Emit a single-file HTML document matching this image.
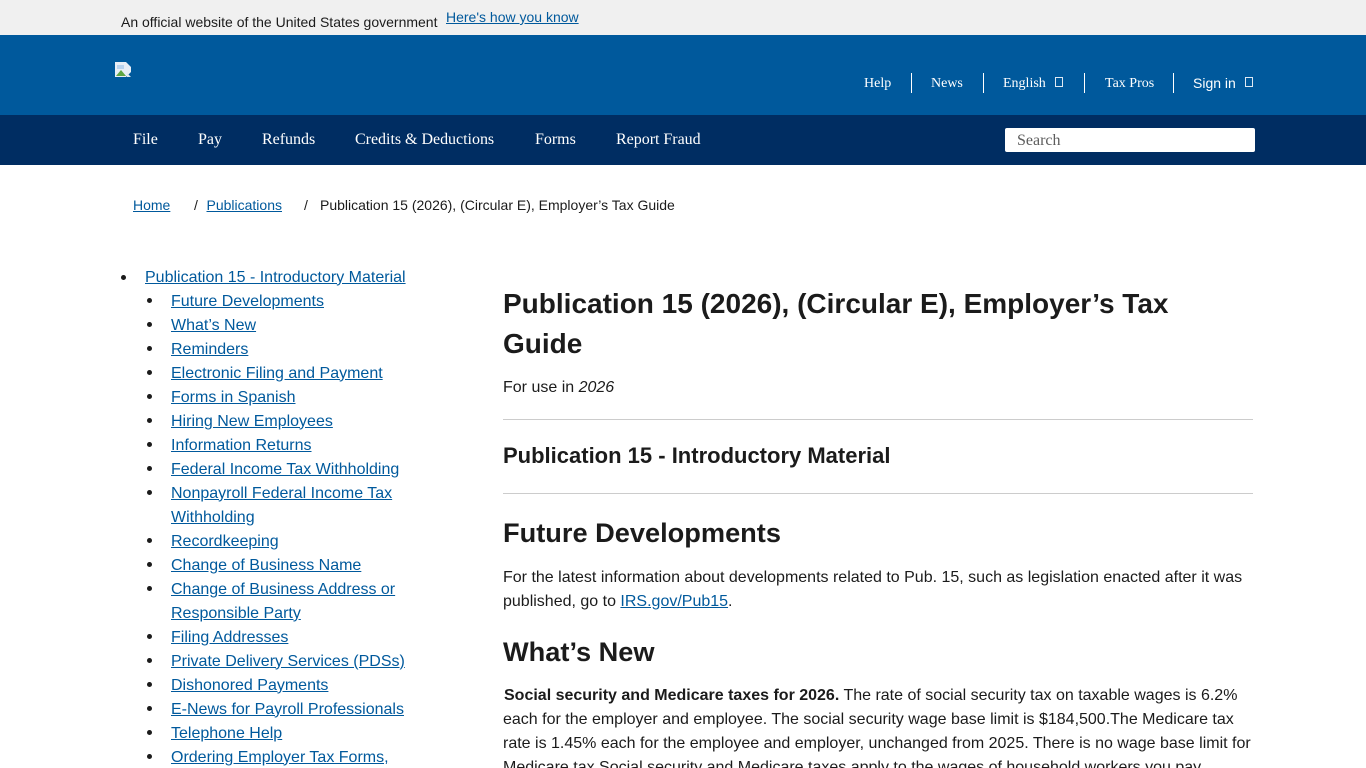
<!DOCTYPE html>
<html lang="en"><head><meta charset="utf-8"><title>Publication 15 (2026), (Circular E), Employer's Tax Guide</title>
<style>
html,body{margin:0;padding:0;width:1366px;height:768px;overflow:hidden;background:#fff}
body{position:relative;font-family:"Liberation Sans",Arial,sans-serif;color:#1b1b1b;font-size:16px}
.a{position:absolute;white-space:nowrap}
a{color:#00599c;text-decoration:underline}
.s{font-family:"Liberation Serif",serif;color:#fff}
.n{font-size:16px;line-height:20px;top:130px;letter-spacing:-.02px}
.t{font-size:14px;line-height:18px;top:75px}
.d{position:absolute;top:73px;width:1px;height:20px;background:#fff}
.b{position:absolute;width:6px;height:8px;border:1px solid #dfe9f3;top:77px}
.l{font-size:16px;line-height:24px;margin-top:1.5px}
.dot{position:absolute;width:5px;height:5px;border-radius:50%;background:#1b1b1b;margin-top:-1px}
.dot.f{margin-top:0}
h1,h2,h3{margin:0;font-weight:700;position:absolute;white-space:nowrap}
hr{position:absolute;left:503px;width:750px;height:1px;margin:0;border:0;background:#ccc}
</style></head><body>
<div class="a" style="left:0;top:0;width:1366px;height:35px;background:#f0f0f0"></div>
<div class="a" style="left:121px;top:14px;font-size:14px;line-height:17px">An official website of the United States government</div>
<a class="a" href="#" style="left:446px;top:9px;font-size:14px;line-height:17px">Here's how you know</a>
<div class="a" style="left:0;top:35px;width:1366px;height:80px;background:#00599c"></div>
<svg class="a" style="left:115px;top:62px" width="16" height="16" viewBox="0 0 16 16"><path d="M0 0H11L16 5V10L11 15H0Z" fill="#e8eef6"/><path d="M1 14 6 8 11 14Z" fill="#5fa544"/><path d="M2 3H9V7H2Z" fill="#b9d3ee"/><path d="M12 11 16 15H12Z" fill="#dfe8f2"/></svg>
<div class="a s t" style="left:864px">Help</div><div class="d" style="left:911px"></div>
<div class="a s t" style="left:931px">News</div><div class="d" style="left:983px"></div>
<div class="a s t" style="left:1003px">English</div><div class="b" style="left:1055px"></div><div class="d" style="left:1084px"></div>
<div class="a s t" style="left:1105px">Tax Pros</div><div class="d" style="left:1173px"></div>
<div class="a" style="left:1193px;top:74px;font-size:14px;line-height:18px;color:#fff">Sign in</div><div class="b" style="left:1245px"></div>
<div class="a" style="left:0;top:115px;width:1366px;height:50px;background:#002d62"></div>
<div class="a s n" style="left:133px">File</div>
<div class="a s n" style="left:198px">Pay</div>
<div class="a s n" style="left:262px">Refunds</div>
<div class="a s n" style="left:355px">Credits &amp; Deductions</div>
<div class="a s n" style="left:535px">Forms</div>
<div class="a s n" style="left:616px">Report Fraud</div>
<div class="a" style="left:1005px;top:128px;width:250px;height:24px;background:#fff;border-radius:2px"></div>
<div class="a" style="left:1017px;top:131px;font-family:'Liberation Serif',serif;font-size:16px;line-height:20px;color:#5c5c5c">Search</div>
<a class="a" href="#" style="left:133px;top:197px;font-size:14px;line-height:17px">Home</a>
<div class="a" style="left:194px;top:197px;font-size:14px;line-height:17px">/</div>
<a class="a" href="#" style="left:206.5px;top:197px;font-size:14px;line-height:17px">Publications</a>
<div class="a" style="left:304px;top:197px;font-size:14px;line-height:17px">/</div>
<div class="a" style="left:320px;top:197px;font-size:14px;line-height:17px">Publication 15 (2026), (Circular E), Employer’s Tax Guide</div>

<div class="dot f" style="left:121px;top:275px"></div><a class="a l" href="#" style="left:145px;top:264px">Publication 15 - Introductory Material</a>
<div class="dot" style="left:147px;top:299px"></div><a class="a l" href="#" style="left:171px;top:288px">Future Developments</a>
<div class="dot" style="left:147px;top:323px"></div><a class="a l" href="#" style="left:171px;top:312px">What’s New</a>
<div class="dot" style="left:147px;top:347px"></div><a class="a l" href="#" style="left:171px;top:336px">Reminders</a>
<div class="dot" style="left:147px;top:371px"></div><a class="a l" href="#" style="left:171px;top:360px">Electronic Filing and Payment</a>
<div class="dot" style="left:147px;top:395px"></div><a class="a l" href="#" style="left:171px;top:384px">Forms in Spanish</a>
<div class="dot" style="left:147px;top:419px"></div><a class="a l" href="#" style="left:171px;top:408px">Hiring New Employees</a>
<div class="dot" style="left:147px;top:443px"></div><a class="a l" href="#" style="left:171px;top:432px">Information Returns</a>
<div class="dot" style="left:147px;top:467px"></div><a class="a l" href="#" style="left:171px;top:456px">Federal Income Tax Withholding</a>
<div class="dot" style="left:147px;top:491px"></div><a class="a l" href="#" style="left:171px;top:480px">Nonpayroll Federal Income Tax</a><a class="a l" href="#" style="left:171px;top:504px">Withholding</a>
<div class="dot" style="left:147px;top:539px"></div><a class="a l" href="#" style="left:171px;top:528px">Recordkeeping</a>
<div class="dot" style="left:147px;top:563px"></div><a class="a l" href="#" style="left:171px;top:552px">Change of Business Name</a>
<div class="dot" style="left:147px;top:587px"></div><a class="a l" href="#" style="left:171px;top:576px">Change of Business Address or</a><a class="a l" href="#" style="left:171px;top:600px">Responsible Party</a>
<div class="dot" style="left:147px;top:635px"></div><a class="a l" href="#" style="left:171px;top:624px">Filing Addresses</a>
<div class="dot" style="left:147px;top:659px"></div><a class="a l" href="#" style="left:171px;top:648px">Private Delivery Services (PDSs)</a>
<div class="dot" style="left:147px;top:683px"></div><a class="a l" href="#" style="left:171px;top:672px">Dishonored Payments</a>
<div class="dot" style="left:147px;top:707px"></div><a class="a l" href="#" style="left:171px;top:696px">E-News for Payroll Professionals</a>
<div class="dot" style="left:147px;top:731px"></div><a class="a l" href="#" style="left:171px;top:720px">Telephone Help</a>
<div class="dot" style="left:147px;top:755px"></div><a class="a l" href="#" style="left:171px;top:744px">Ordering Employer Tax Forms,</a>

<h1 style="left:503px;top:284px;font-size:28px;line-height:40px">Publication 15 (2026), (Circular E), Employer’s Tax<br>Guide</h1>
<div class="a l" style="left:503px;top:374px">For use in <i>2026</i></div>
<hr style="top:419px">
<h2 style="left:503px;top:442px;font-size:22px;line-height:28px">Publication 15 - Introductory Material</h2>
<hr style="top:493px">
<h2 style="left:503px;top:516px;font-size:27.2px;line-height:34px">Future Developments</h2>
<div class="a l" style="left:503px;top:564px">For the latest information about developments related to Pub. 15, such as legislation enacted after it was</div>
<div class="a l" style="left:503px;top:588px">published, go to <a href="#">IRS.gov/Pub15</a>.</div>
<h2 style="left:503px;top:635px;font-size:27.2px;line-height:34px">What’s New</h2>
<div class="a l" style="left:504px;top:682px"><b>Social security and Medicare taxes for 2026.</b> The rate of social security tax on taxable wages is 6.2%</div>
<div class="a l" style="left:503px;top:706px">each for the employer and employee. The social security wage base limit is $184,500.The Medicare tax</div>
<div class="a l" style="left:503px;top:730px">rate is 1.45% each for the employee and employer, unchanged from 2025. There is no wage base limit for</div>
<div class="a l" style="left:503px;top:754px">Medicare tax.Social security and Medicare taxes apply to the wages of household workers you pay</div>
</body></html>
